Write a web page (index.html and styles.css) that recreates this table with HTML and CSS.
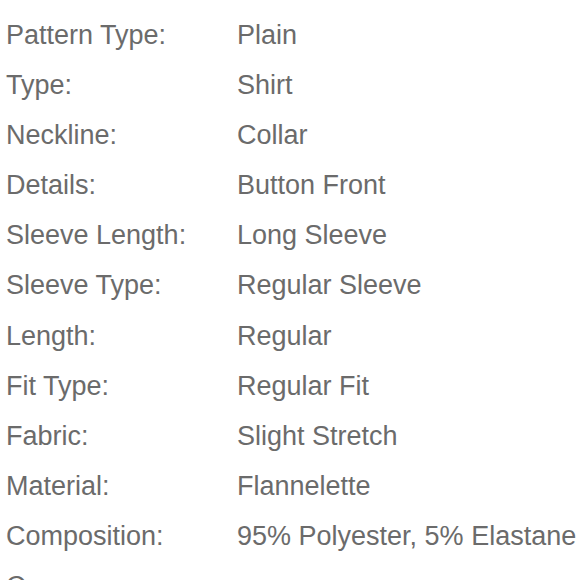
FILE: index.html
```html
<!DOCTYPE html>
<html>
<head>
<meta charset="utf-8">
<link rel="stylesheet" href="styles.css">
</head>
<body>
<dl class="specs">
  <div class="row"><dt>Pattern Type:</dt><dd>Plain</dd></div>
  <div class="row"><dt>Type:</dt><dd>Shirt</dd></div>
  <div class="row"><dt>Neckline:</dt><dd>Collar</dd></div>
  <div class="row"><dt>Details:</dt><dd>Button Front</dd></div>
  <div class="row"><dt>Sleeve Length:</dt><dd>Long Sleeve</dd></div>
  <div class="row"><dt>Sleeve Type:</dt><dd>Regular Sleeve</dd></div>
  <div class="row"><dt>Length:</dt><dd>Regular</dd></div>
  <div class="row"><dt>Fit Type:</dt><dd>Regular Fit</dd></div>
  <div class="row"><dt>Fabric:</dt><dd>Slight Stretch</dd></div>
  <div class="row"><dt>Material:</dt><dd>Flannelette</dd></div>
  <div class="row"><dt>Composition:</dt><dd>95% Polyester, 5% Elastane</dd></div>
  <div class="row"><dt>Care:</dt><dd></dd></div>
</dl>
</body>
</html>
```
FILE: styles.css
```css
html, body {
  margin: 0;
  padding: 0;
  background: #ffffff;
  overflow: hidden;
}
.specs {
  margin: 0;
  padding: 10px 0 0 6px;
  font-family: "Liberation Sans", Arial, sans-serif;
  font-size: 27px;
  line-height: 50.1px;
  color: #6b6b6b;
}
.row {
  display: grid;
  grid-template-columns: 231px 1fr;
}
.row dt, .row dd {
  margin: 0;
  white-space: nowrap;
}
```
